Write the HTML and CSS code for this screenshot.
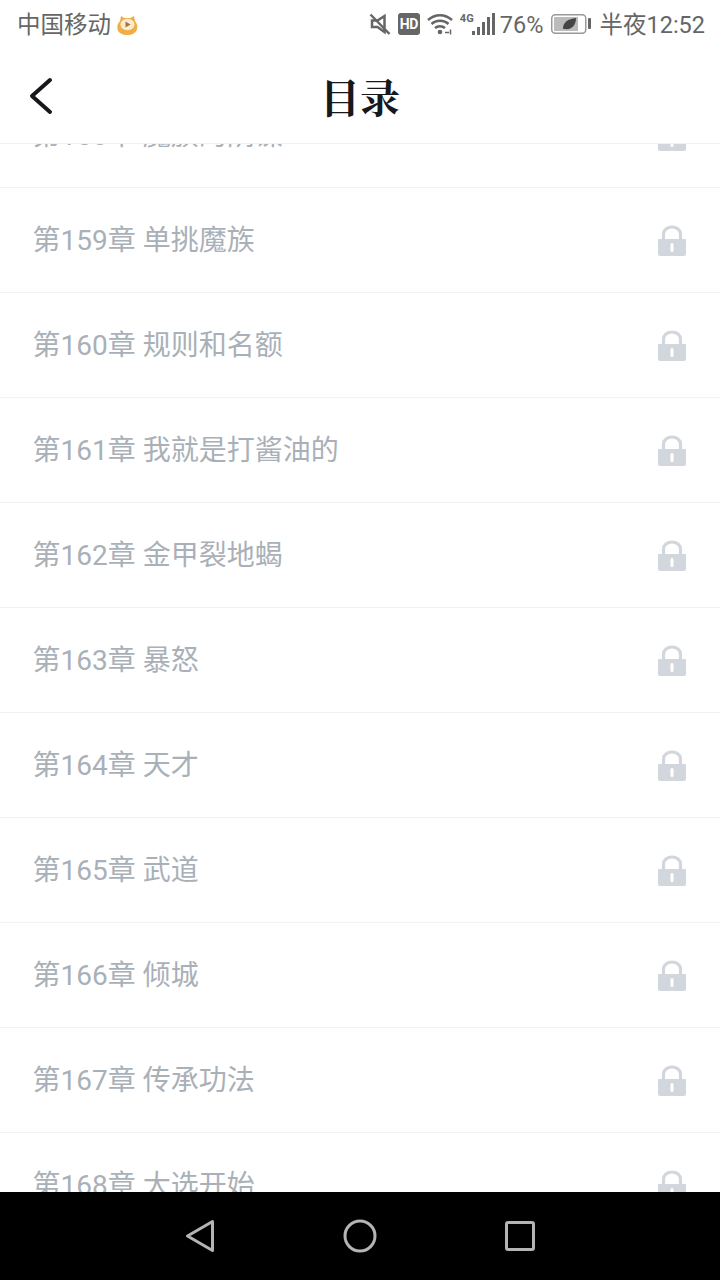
FILE: index.html
```html
<!DOCTYPE html>
<html lang="zh-CN">
<head>
<meta charset="utf-8">
<title>目录</title>
<link rel="stylesheet" href="styles.css">
</head>
<body>
<div class="page">
  <div class="status">
    <div class="status-left">
      <span class="carrier">中国移动</span>
      <svg class="app-icon" width="21" height="20" viewBox="0 0 21 20"><path d="M4 1l3.500 2h6L17 1l1 5c2 3 3 5 2 8-1 4-5 6-9.500 6S1 18 .5 14c-.500-3 0-5 2.500-8z" fill="#eeae48"/><ellipse cx="10.500" cy="9.500" rx="7" ry="5.800" fill="#fbeccb"/><path d="M8.500 6.500l5 3-5 3z" fill="#a8704a"/></svg>
    </div>
    <div class="status-right">
      <svg class="i-mute" width="22" height="22" viewBox="0 0 22 22" fill="none" stroke="#666" stroke-width="2.500"><path d="M1.500 1.500l19 19.500"/><path d="M15.500 3v16l-7-5H3V7.500h5.500z"/></svg>
      <span class="hd">HD</span>
      <svg class="i-wifi" width="26" height="22" viewBox="0 0 26 22" fill="none" stroke="#666" stroke-width="2.500"><path d="M1 7c7-6.500 17-6.500 24 0M4.500 11c4.500-4.500 12.500-4.500 17 0M8 15c2.700-2.500 7.300-2.500 10 0"/><circle cx="13" cy="19" r="2.300" fill="#666" stroke="none"/><path d="M18 19.500h4M23.500 16.500v5" stroke-width="1.500"/></svg>
      <span class="net">
        <span class="net-label">4G</span>
        <svg class="i-bars" width="23" height="22" viewBox="0 0 23 22" fill="#666"><rect x="0" y="18" width="3" height="4"/><rect x="5" y="14" width="3" height="8"/><rect x="10" y="9" width="3" height="13"/><rect x="15" y="4" width="3" height="18"/><rect x="20" y="0" width="3" height="22"/></svg>
      </span>
      <span class="pct">76%</span>
      <svg class="batt" width="40" height="20" viewBox="0 0 40 20"><rect x=".75" y=".75" width="34" height="18.500" rx="3.500" fill="#fff" stroke="#999" stroke-width="1.500"/><rect x="3" y="3" width="24" height="14" fill="#bbb"/><path d="M12 15c0-7 5-10 13-11 0 7-4 12-11 11z" fill="#444"/><rect x="37" y="4" width="3" height="11" rx="1" fill="#666"/></svg>
      <span class="clock">半夜12:52</span>
    </div>
  </div>

  <div class="header">
    <svg class="back" width="26" height="38" viewBox="0 0 26 38" fill="none" stroke="#16181c" stroke-width="4" stroke-linecap="round" stroke-linejoin="round"><path d="M22 3L4 19l18 16"/></svg>
    <h1 class="title">目录</h1>
  </div>

  <div class="list">
    <div class="rows">
      <div class="row"><span class="name">第158章 魔族的阴谋</span><svg class="lock" width="30" height="32" viewBox="0 0 30 32"><use href="#lock"/></svg></div>
      <div class="row"><span class="name">第159章 单挑魔族</span><svg class="lock" width="30" height="32" viewBox="0 0 30 32"><use href="#lock"/></svg></div>
      <div class="row"><span class="name">第160章 规则和名额</span><svg class="lock" width="30" height="32" viewBox="0 0 30 32"><use href="#lock"/></svg></div>
      <div class="row"><span class="name">第161章 我就是打酱油的</span><svg class="lock" width="30" height="32" viewBox="0 0 30 32"><use href="#lock"/></svg></div>
      <div class="row"><span class="name">第162章 金甲裂地蝎</span><svg class="lock" width="30" height="32" viewBox="0 0 30 32"><use href="#lock"/></svg></div>
      <div class="row"><span class="name">第163章 暴怒</span><svg class="lock" width="30" height="32" viewBox="0 0 30 32"><use href="#lock"/></svg></div>
      <div class="row"><span class="name">第164章 天才</span><svg class="lock" width="30" height="32" viewBox="0 0 30 32"><use href="#lock"/></svg></div>
      <div class="row"><span class="name">第165章 武道</span><svg class="lock" width="30" height="32" viewBox="0 0 30 32"><use href="#lock"/></svg></div>
      <div class="row"><span class="name">第166章 倾城</span><svg class="lock" width="30" height="32" viewBox="0 0 30 32"><use href="#lock"/></svg></div>
      <div class="row"><span class="name">第167章 传承功法</span><svg class="lock" width="30" height="32" viewBox="0 0 30 32"><use href="#lock"/></svg></div>
      <div class="row"><span class="name">第168章 大选开始</span><svg class="lock" width="30" height="32" viewBox="0 0 30 32"><use href="#lock"/></svg></div>
    </div>
  </div>

  <div class="navbar">
    <svg width="30" height="34" viewBox="0 0 30 34" fill="none" stroke="#b4b4b4" stroke-width="3" stroke-linejoin="round"><path d="M27.500 2.500v29L2.500 17z"/></svg>
    <svg width="34" height="34" viewBox="0 0 34 34" fill="none" stroke="#b4b4b4" stroke-width="3"><circle cx="17" cy="17" r="15"/></svg>
    <svg width="30" height="30" viewBox="0 0 30 30" fill="none" stroke="#b4b4b4" stroke-width="3" stroke-linejoin="round"><rect x="1.500" y="1.500" width="27" height="27" rx="1.500"/></svg>
  </div>
</div>
<svg class="defs" width="0" height="0"><defs><g id="lock"><path d="M6.500 15V10a8.500 7 0 0 1 17 0v5" fill="none" stroke="#d2d7de" stroke-width="3.200"/><path d="M2 15h26a1 1 0 0 1 1 1v14a2 2 0 0 1-2 2H3a2 2 0 0 1-2-2V16a1 1 0 0 1 1-1z" fill="#d2d7de"/><rect x="13.500" y="19" width="3" height="9" rx="1.500" fill="#fff"/></g></defs></svg>
</body>
</html>
```
FILE: styles.css
```css
* { box-sizing: border-box; margin: 0; padding: 0; }
html, body { width: 720px; height: 1280px; overflow: hidden; background: #fff; }
body { font-family: Roboto, "Noto Sans CJK SC", sans-serif; }
.page { width: 720px; height: 1280px; display: flex; flex-direction: column; }

.status { height: 50px; flex: none; display: flex; justify-content: space-between; align-items: center; padding: 0 15px 0 17px; color: #666; font-size: 23.5px; }
.status-left { display: flex; align-items: center; gap: 6px; }
.carrier { margin-bottom: 4px; }
.app-icon { margin-bottom: 1px; }
.status-right { display: flex; align-items: center; }
.i-mute { margin-bottom: 2px; }
.hd { width: 22px; height: 22px; margin-left: 7px; margin-bottom: 2px; border-radius: 3px; background: #666; color: #fff; font-size: 14px; font-weight: 700; letter-spacing: -.5px; line-height: 22px; text-align: center; }
.i-wifi { margin-left: 7px; margin-bottom: 2px; }
.net { display: flex; align-items: flex-end; position: relative; width: 35px; height: 22px; justify-content: flex-end; margin-left: 7px; margin-bottom: 2px; }
.net-label { position: absolute; left: 0; top: 0; font-size: 11px; font-weight: 700; line-height: 12px; }
.pct { margin-left: 5px; }
.batt { margin-left: 8px; margin-bottom: 2px; }
.clock { margin-left: 8px; margin-bottom: 4px; }

.header { height: 94px; flex: none; display: flex; align-items: center; justify-content: center; position: relative; border-bottom: 1px solid #f0f0f0; }
.back { position: absolute; left: 28px; top: 27px; }
.title { font-family: "Noto Serif CJK SC", "Noto Sans CJK SC", serif; font-size: 40px; font-weight: 700; color: #16181c; line-height: 1; margin-bottom: 2px; }

.list { flex: 1; overflow: hidden; min-height: 0; }
.rows { margin-top: -61px; }
.row { height: 105px; display: flex; align-items: center; justify-content: space-between; padding: 0 33px 0 32.5px; border-bottom: 1px solid #f2f2f2; font-size: 28px; color: #a9b0b8; }
.name { margin-bottom: 4px; }
.lock { flex: none; }
.defs { position: absolute; }

.navbar { height: 88px; flex: none; background: #000; display: flex; align-items: center; justify-content: space-between; padding: 0 185px; }
```
